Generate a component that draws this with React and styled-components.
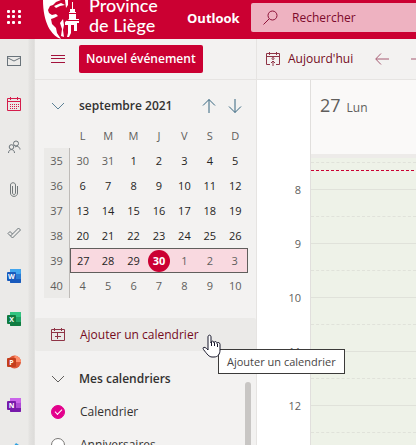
import React from "react";
import styled, { createGlobalStyle, css } from "styled-components";

const Global = createGlobalStyle`
  *, *::before, *::after { box-sizing: border-box; }
  html, body { margin: 0; overflow: hidden; }
  body, button, input {
    font-family: "Open Sans", "Noto Sans", sans-serif;
    font-size: 12px;
    line-height: 20px;
    color: #323130;
  }
  button { margin: 0; padding: 0; border: 0; background: none; cursor: pointer; }
  svg { display: block; flex: none; }
`;

const brand = "#cb0032";

const Shell = styled.div`
  display: flex;
  flex-direction: column;
  height: 100vh;
  overflow: hidden;
  background: #f3f2f1;
`;

const TopBar = styled.header`
  display: flex;
  flex: none;
  height: 39px;
  background: ${brand};
  color: #fff;
`;

const Launcher = styled.button`
  display: grid;
  flex: none;
  place-items: center;
  width: 28px;
  height: 33px;
`;

const Brand = styled.a`
  display: flex;
  flex: none;
  gap: 9px;
  width: 144px;
  margin-left: 15px;
  color: #fff;
  text-decoration: none;
`;

const BrandName = styled.span`
  margin-top: -5px;
  font-family: Lato, "Open Sans", sans-serif;
  font-size: 18px;
  font-weight: 500;
  line-height: 20px;
  white-space: pre-line;
`;

const AppName = styled.a`
  flex: none;
  width: 64px;
  color: #fff;
  font-size: 13px;
  font-weight: 700;
  line-height: 36px;
  text-decoration: none;
`;

const Search = styled.label`
  display: flex;
  flex: 1;
  align-items: center;
  gap: 14px;
  min-width: 0;
  height: 29px;
  margin-top: 3px;
  padding-left: 12px;
  border-radius: 2px 0 0 2px;
  background: #eeb2c1;
`;

const SearchInput = styled.input`
  flex: 1;
  min-width: 0;
  padding: 0;
  border: 0;
  outline: 0;
  background: transparent;
  color: #7d0a2c;
  &::placeholder { color: #7d0a2c; opacity: 1; }
`;

const Body = styled.div`
  display: flex;
  flex: 1;
  min-height: 0;
`;

const Rail = styled.nav`
  display: flex;
  flex: none;
  flex-direction: column;
  width: 35px;
  background: linear-gradient(90deg, #ebeae8 28px, #e4e3e1 29px, #dddcda 34px, #e8e7e5 35px);
`;

const RailItem = styled.a`
  display: grid;
  flex: none;
  place-items: center;
  width: 28px;
  height: 43px;
`;

const Workspace = styled.div`
  display: flex;
  flex: 1;
  flex-direction: column;
  min-width: 0;
`;

const Toolbar = styled.div`
  display: flex;
  flex: none;
  height: 41px;
  overflow: hidden;
  border-bottom: 1px solid #e6e4e2;
`;

const ToolbarLeft = styled.div`
  display: flex;
  flex: none;
  align-items: center;
  gap: 14px;
  width: 222px;
  padding-left: 16px;
  border-right: 1px solid #e6e4e2;
`;

const IconButton = styled.button`
  display: grid;
  flex: none;
  place-items: center;
`;

const NewEvent = styled.button`
  height: 28px;
  padding: 0 7px;
  border-radius: 2px;
  background: ${brand};
  color: #fff;
  font-weight: 600;
  white-space: nowrap;
`;

const ToolbarRight = styled.div`
  display: flex;
  flex: 1;
  align-items: center;
  gap: 22px;
  min-width: 0;
  padding-left: 9px;
`;

const TodayButton = styled.button`
  display: flex;
  flex: none;
  align-items: center;
  gap: 8px;
  color: #750b1c;
`;

const Columns = styled.div`
  display: flex;
  flex: 1;
  min-height: 0;
`;

const Sidebar = styled.aside`
  position: relative;
  flex: none;
  width: 222px;
  border-right: 1px solid #e6e4e2;
`;

const MonthBar = styled.div`
  display: flex;
  align-items: center;
  height: 43px;
  padding: 9px 14px 0 16px;
`;

const MonthTitle = styled.button`
  flex: 1;
  padding-left: 14px;
  font-weight: 600;
  text-align: left;
`;

const MonthArrows = styled.div`
  display: flex;
  gap: 12px;
`;

const Month = styled.table`
  width: 204px;
  margin-left: 9px;
  border-spacing: 0;
  table-layout: fixed;
`;

const Weekday = styled.th`
  height: 25px;
  padding: 0;
  color: #605e5c;
  font-size: 11px;
  font-weight: 400;
`;

const WeekCorner = styled.td`
  width: 26px;
  padding: 0;
`;

const WeekNumber = styled.th`
  height: 25px;
  padding: 0;
  border-right: 1px solid #bebbb8;
  background: #ebeae8;
  color: #605e5c;
  font-size: 11px;
  font-weight: 400;
`;

const DayCell = styled.td`
  height: 25px;
  padding: 0;
  ${(p) => p.$active && css`
    border: solid #605e5c;
    border-width: 1px 0;
    background: #f9d9e0;
    &:nth-child(2) { border-left-width: 1px; }
    &:last-child { border-right-width: 1px; }
  `}
`;

const Day = styled.button`
  display: block;
  width: 22px;
  height: 22px;
  margin: 0 auto;
  border-radius: 50%;
  color: ${(p) => (p.$muted ? "#605e5c" : "#252423")};
  font-size: 11px;
  line-height: 22px;
  ${(p) => p.$today && css`
    background: ${brand};
    color: #fff;
    font-weight: 700;
  `}
`;

const AddCalendar = styled.button`
  display: flex;
  align-items: center;
  gap: 15px;
  width: 100%;
  height: 33px;
  margin: 20px 0 11px;
  padding-left: 16px;
  border-radius: 2px;
  background: #ebeae8;
  color: #750b1c;
`;

const GroupTitle = styled.button`
  display: flex;
  align-items: center;
  gap: 14px;
  width: 100%;
  height: 33px;
  padding-left: 16px;
  font-weight: 600;
`;

const CalendarOption = styled.label`
  display: flex;
  align-items: center;
  gap: 15px;
  height: 33px;
  padding-left: 16px;
`;

const Tick = styled.input`
  appearance: none;
  width: 14px;
  height: 14px;
  margin: 0;
  border: 1px solid #7a7876;
  border-radius: 50%;
  background: #fff;
  &:checked {
    border-color: #e3008c;
    background: #e3008c;
  }
  &:checked::after {
    content: "";
    display: block;
    width: 7px;
    height: 4px;
    margin: 3px 0 0 3px;
    border: solid #fff;
    border-width: 0 0 1px 1px;
    transform: rotate(-45deg);
  }
`;

const ScrollThumb = styled.div`
  position: absolute;
  top: 302px;
  right: 5px;
  bottom: 0;
  width: 6px;
  border-radius: 3px 3px 0 0;
  background: #c8c6c4;
`;

const Pointer = styled.div`
  position: absolute;
  z-index: 3;
  top: 254px;
  left: 167px;
`;

const Tooltip = styled.div`
  position: absolute;
  z-index: 2;
  top: 269px;
  left: 183px;
  padding: 1px 8px;
  border: 1px solid #3b3a39;
  background: #fff;
  color: #484644;
  font-size: 11px;
  line-height: 21px;
  white-space: nowrap;
`;

const Schedule = styled.main`
  display: grid;
  flex: 1;
  grid-template-columns: 53px 1fr;
  min-width: 0;
  overflow: hidden;
  background: #fff;
`;

const Hours = styled.div`
  padding-top: 97px;
`;

const Hour = styled.div`
  height: 54px;
  padding-right: 9px;
  color: #605e5c;
  font-size: 11px;
  line-height: 26px;
  text-align: right;
`;

const DayColumn = styled.section`
  min-width: 0;
  border-left: 1px solid #e1dfdd;
`;

const DayHeader = styled.h2`
  display: flex;
  align-items: baseline;
  gap: 6px;
  height: 78px;
  margin: 0;
  padding: 10px 0 0 9px;
  border-bottom: 4px solid #edebe9;
  background: #faf9f8;
  color: #605e5c;
  font-size: 12px;
  font-weight: 400;
`;

const DayNumber = styled.span`
  font-size: 18px;
  line-height: 30px;
`;

const Slots = styled.div`
  display: flex;
  flex-direction: column;
  background: #eef2e8;
`;

const Slot = styled.div`
  flex: none;
  height: ${(p) => (p.$first ? 5 : 27)}px;
  border-bottom: 1px ${(p) => (p.$half ? "dashed" : "solid")} #e0e2da;
`;

const NowSlot = styled(Slot)`
  padding-top: 7px;
`;

const NowLine = styled.div`
  height: 1px;
  background: repeating-linear-gradient(90deg, ${brand} 0 3px, transparent 3px 5px);
`;

const Svg = ({ w = 14, h = 14, children, color = "#605e5c" }) => (
  <svg width={w} height={h} viewBox={`0 0 ${w} ${h}`} fill="none" stroke={color} aria-hidden="true">
    {children}
  </svg>
);

const LauncherIcon = () => (
  <Svg color="none">
    {[0, 5, 11].map((y) => [0, 5, 11].map((x) => (
      <rect key={`${x}-${y}`} x={x} y={y} width="3" height="3" rx="1" fill="#fff" />
    )))}
  </Svg>
);

const Crest = () => (
  <Svg w={37} h={39} color="none">
    <path fill="#fff" d="M0 0H18L13 2 10 5 7 6 5 10 6 13 9 15 13 14 15 16 11 18 8 19 9 24 13 28 14 33 18 39C8 36 0 22 0 0Z" />
    <path fill="#fff" d="M11 6 18 3 22 5 17 6 13 8ZM22 0H25V5L23 8Z" />
    <path fill="#fff" d="M17 23 20 19 21 25 20 30 21 37 18 36 19 29Z" />
    <path fill="#fff" d="M29 2H30V9H32V12H33V19H36V23H34V31H31V25H28V33L26 37H24L25 33V25H22V22L26 19V12H27V9H29Z" />
    <path stroke={brand} d="M26 13.5H33M24 20.5H36" />
  </Svg>
);

const SearchIcon = () => (
  <Svg w={15} h={15} color="#8d1238">
    <circle cx="9.5" cy="5.5" r="4.5" />
    <path d="M6 9 0.5 14.5" />
  </Svg>
);

const MailIcon = () => (
  <Svg h={10} color="#69737a">
    <rect x="0.5" y="0.5" width="13" height="9" />
    <path d="M1 2 7 5 13 2" />
  </Svg>
);

const CalendarIcon = () => (
  <Svg color="#d51c4b">
    <path d="M.5 1.5H13.5V13.5H.5ZM.5 4.5H13.5M3.5 0V3M10.5 0V3" />
    <path strokeDasharray="1 1" d="M3 7.5H12M3 9.5H12M3 11.5H10" />
  </Svg>
);

const PeopleIcon = () => (
  <Svg color="#6b7479">
    <circle cx="9" cy="3.5" r="2.5" />
    <circle cx="4.5" cy="7" r="2.3" />
    <path d="M1.5 13C1.5 8.5 7.5 8.5 7.5 13M8 7C10 5.5 13 7 13 9.5" />
  </Svg>
);

const ClipIcon = () => (
  <Svg w={8} h={15} color="#71787a">
    <path d="M2.5 4V11C2.5 13 5.5 13 5.5 11V3C5.5 0 .5 0 .5 3V11C.5 15.5 7.5 15.5 7.5 11V4" />
  </Svg>
);

const TodoIcon = () => (
  <Svg color="#6b7479">
    <path d="M1 7.5 3 5.5 5.5 8 11.5 2 13.5 4 5.5 12Z" />
    <path d="M3.5 10 5.5 8" />
  </Svg>
);

const OfficeIcon = ({ letter, dark, mid, light, round }) => (
  <Svg color="none">
    {round ? (
      <>
        <circle cx="7.5" cy="7" r="6.5" fill={mid} />
        <path d="M7.5.5A6.5 6.5 0 0 1 14 7H7.5Z" fill={light} />
      </>
    ) : (
      <>
        <rect x="3" width="11" height="14" rx="1" fill={mid} />
        <rect x="3" width="11" height="5" rx="1" fill={light} />
        <path d="M3 10H14V13Q14 14 13 14H4Q3 14 3 13Z" fill={dark} />
      </>
    )}
    <rect y="3" width="9" height="9" rx="1" fill={dark} />
    <text x="4.5" y="10" fill="#fff" fontSize="7" fontWeight="700" textAnchor="middle">{letter}</text>
  </Svg>
);

const CheckBlueIcon = () => (
  <Svg color="none">
    <path d="M0 7 3 4 6 6 9 2 12 4 5 13Z" fill="#2ba0e0" />
    <path d="M0 7 3 4 8 9 5 13Z" fill="#1a85cd" />
  </Svg>
);

const MenuIcon = () => (
  <Svg h={8} color="#a3123c">
    <path d="M0 .5H14M0 3.5H14M0 7.5H14" />
  </Svg>
);

const TodayIcon = () => (
  <Svg color="#8f3446">
    <path d="M4 12.5H.5V1.5H13.5V12.5H10M.5 4.5H13.5M3.5 0V3M10.5 0V3M7 14V9M5 11 7 9 9 11" />
    <circle cx="7" cy="6.5" r="1" />
  </Svg>
);

const AddIcon = () => (
  <Svg color="#8f3446">
    <path d="M.5 1.5H13.5V12.5H.5ZM.5 4.5H13.5M3.5 0V3M10.5 0V3M6.5 5V11M4 8.5H10" />
  </Svg>
);

const BackArrow = () => (
  <Svg h={12} color="#a65b72"><path d="M6 .5 .7 6 6 11.5M1 6H14" /></Svg>
);
const ForwardArrow = () => (
  <Svg h={12} color="#a65b72"><path d="M8 .5 13.3 6 8 11.5M13 6H0" /></Svg>
);
const UpArrow = ({ down }) => (
  <Svg color="#35657f">
    <path d={down ? "M7 0V13.5M1 7.5 7 13.5 13 7.5" : "M7 14V.5M1 6.5 7 .5 13 6.5"} />
  </Svg>
);
const Chevron = ({ color }) => (
  <Svg h={8} color={color}><path d="M1 1 7 7 13 1" /></Svg>
);

const HandIcon = () => (
  <Svg w={19} h={24} color="#17172b">
    <path fill="#fff" strokeLinejoin="round" d="M6 16V3C6 .5 9 .5 9 3V9C9 6.5 12 6.5 12 9 12 7 15 7 15 9.5 15 8 18 8 18 10.5V16C18 20 16 23 12 23H10C7 23 5 20 1.5 15.5 0 13 3 12 6 16Z" />
    <path d="M9.5 8V12M12.5 9V12M15.5 10V13" />
  </Svg>
);

const railItems = [
  ["Courrier", <MailIcon />],
  ["Calendrier", <CalendarIcon />],
  ["Contacts", <PeopleIcon />],
  ["Fichiers", <ClipIcon />],
  ["Tâches", <TodoIcon />],
  ["Word", <OfficeIcon letter="W" dark="#185abd" mid="#2b7cd3" light="#41a5ee" />],
  ["Excel", <OfficeIcon letter="X" dark="#107c41" mid="#21a366" light="#33c481" />],
  ["PowerPoint", <OfficeIcon letter="P" dark="#c43e1c" mid="#dd5836" light="#ff8f6b" round />],
  ["OneNote", <OfficeIcon letter="N" dark="#7719aa" mid="#ae4bd5" light="#ca64ea" />],
  ["To Do", <CheckBlueIcon />],
];

const weeks = [
  [35, [30, 31, 1, 2, 3, 4, 5]],
  [36, [6, 7, 8, 9, 10, 11, 12]],
  [37, [13, 14, 15, 16, 17, 18, 19]],
  [38, [20, 21, 22, 23, 24, 25, 26]],
  [39, [27, 28, 29, 30, 1, 2, 3]],
  [40, [4, 5, 6, 7, 8, 9, 10]],
];

const isMuted = (week, day) => week === 40 || (week === 39 && day < 10) || (week === 35 && day > 20);

export default function App() {
  return (
    <Shell>
      <Global />
      <TopBar>
        <Launcher aria-label="Lanceur d'applications"><LauncherIcon /></Launcher>
        <Brand href="#"><Crest /><BrandName>{"Province\nde Liège"}</BrandName></Brand>
        <AppName href="#">Outlook</AppName>
        <Search>
          <SearchIcon />
          <SearchInput type="search" placeholder="Rechercher" aria-label="Rechercher" />
        </Search>
      </TopBar>
      <Body>
        <Rail>
          {railItems.map(([name, icon]) => (
            <RailItem key={name} href="#" aria-label={name}>{icon}</RailItem>
          ))}
        </Rail>
        <Workspace>
          <Toolbar>
            <ToolbarLeft>
              <IconButton aria-label="Menu"><MenuIcon /></IconButton>
              <NewEvent>Nouvel événement</NewEvent>
            </ToolbarLeft>
            <ToolbarRight>
              <TodayButton><TodayIcon />Aujourd'hui</TodayButton>
              <IconButton aria-label="Précédent"><BackArrow /></IconButton>
              <IconButton aria-label="Suivant"><ForwardArrow /></IconButton>
            </ToolbarRight>
          </Toolbar>
          <Columns>
            <Sidebar>
              <MonthBar>
                <IconButton aria-label="Réduire"><Chevron color="#5c8196" /></IconButton>
                <MonthTitle>septembre 2021</MonthTitle>
                <MonthArrows>
                  <IconButton aria-label="Mois précédent"><UpArrow /></IconButton>
                  <IconButton aria-label="Mois suivant"><UpArrow down /></IconButton>
                </MonthArrows>
              </MonthBar>
              <Month>
                <thead>
                  <tr>
                    <WeekCorner />
                    {["L", "M", "M", "J", "V", "S", "D"].map((d, i) => <Weekday key={i} scope="col">{d}</Weekday>)}
                  </tr>
                </thead>
                <tbody>
                  {weeks.map(([week, days]) => (
                    <tr key={week}>
                      <WeekNumber scope="row">{week}</WeekNumber>
                      {days.map((day) => (
                        <DayCell key={day} $active={week === 39}>
                          <Day $muted={isMuted(week, day)} $today={week === 39 && day === 30}>{day}</Day>
                        </DayCell>
                      ))}
                    </tr>
                  ))}
                </tbody>
              </Month>
              <AddCalendar><AddIcon />Ajouter un calendrier</AddCalendar>
              <GroupTitle><Chevron color="#605e5c" />Mes calendriers</GroupTitle>
              <CalendarOption><Tick type="checkbox" defaultChecked />Calendrier</CalendarOption>
              <CalendarOption><Tick type="checkbox" />Anniversaires</CalendarOption>
              <ScrollThumb />
              <Tooltip role="tooltip">Ajouter un calendrier</Tooltip>
              <Pointer><HandIcon /></Pointer>
            </Sidebar>
            <Schedule>
              <Hours>
                {[8, 9, 10, 11, 12].map((h) => <Hour key={h}>{h}</Hour>)}
              </Hours>
              <DayColumn>
                <DayHeader><DayNumber>27</DayNumber>Lun</DayHeader>
                <Slots>
                  <Slot $first $half />
                  <NowSlot><NowLine /></NowSlot>
                  {[0, 1, 2, 3, 4, 5, 6, 7, 8, 9].map((i) => <Slot key={i} $half={i % 2 === 0} />)}
                </Slots>
              </DayColumn>
            </Schedule>
          </Columns>
        </Workspace>
      </Body>
    </Shell>
  );
}
